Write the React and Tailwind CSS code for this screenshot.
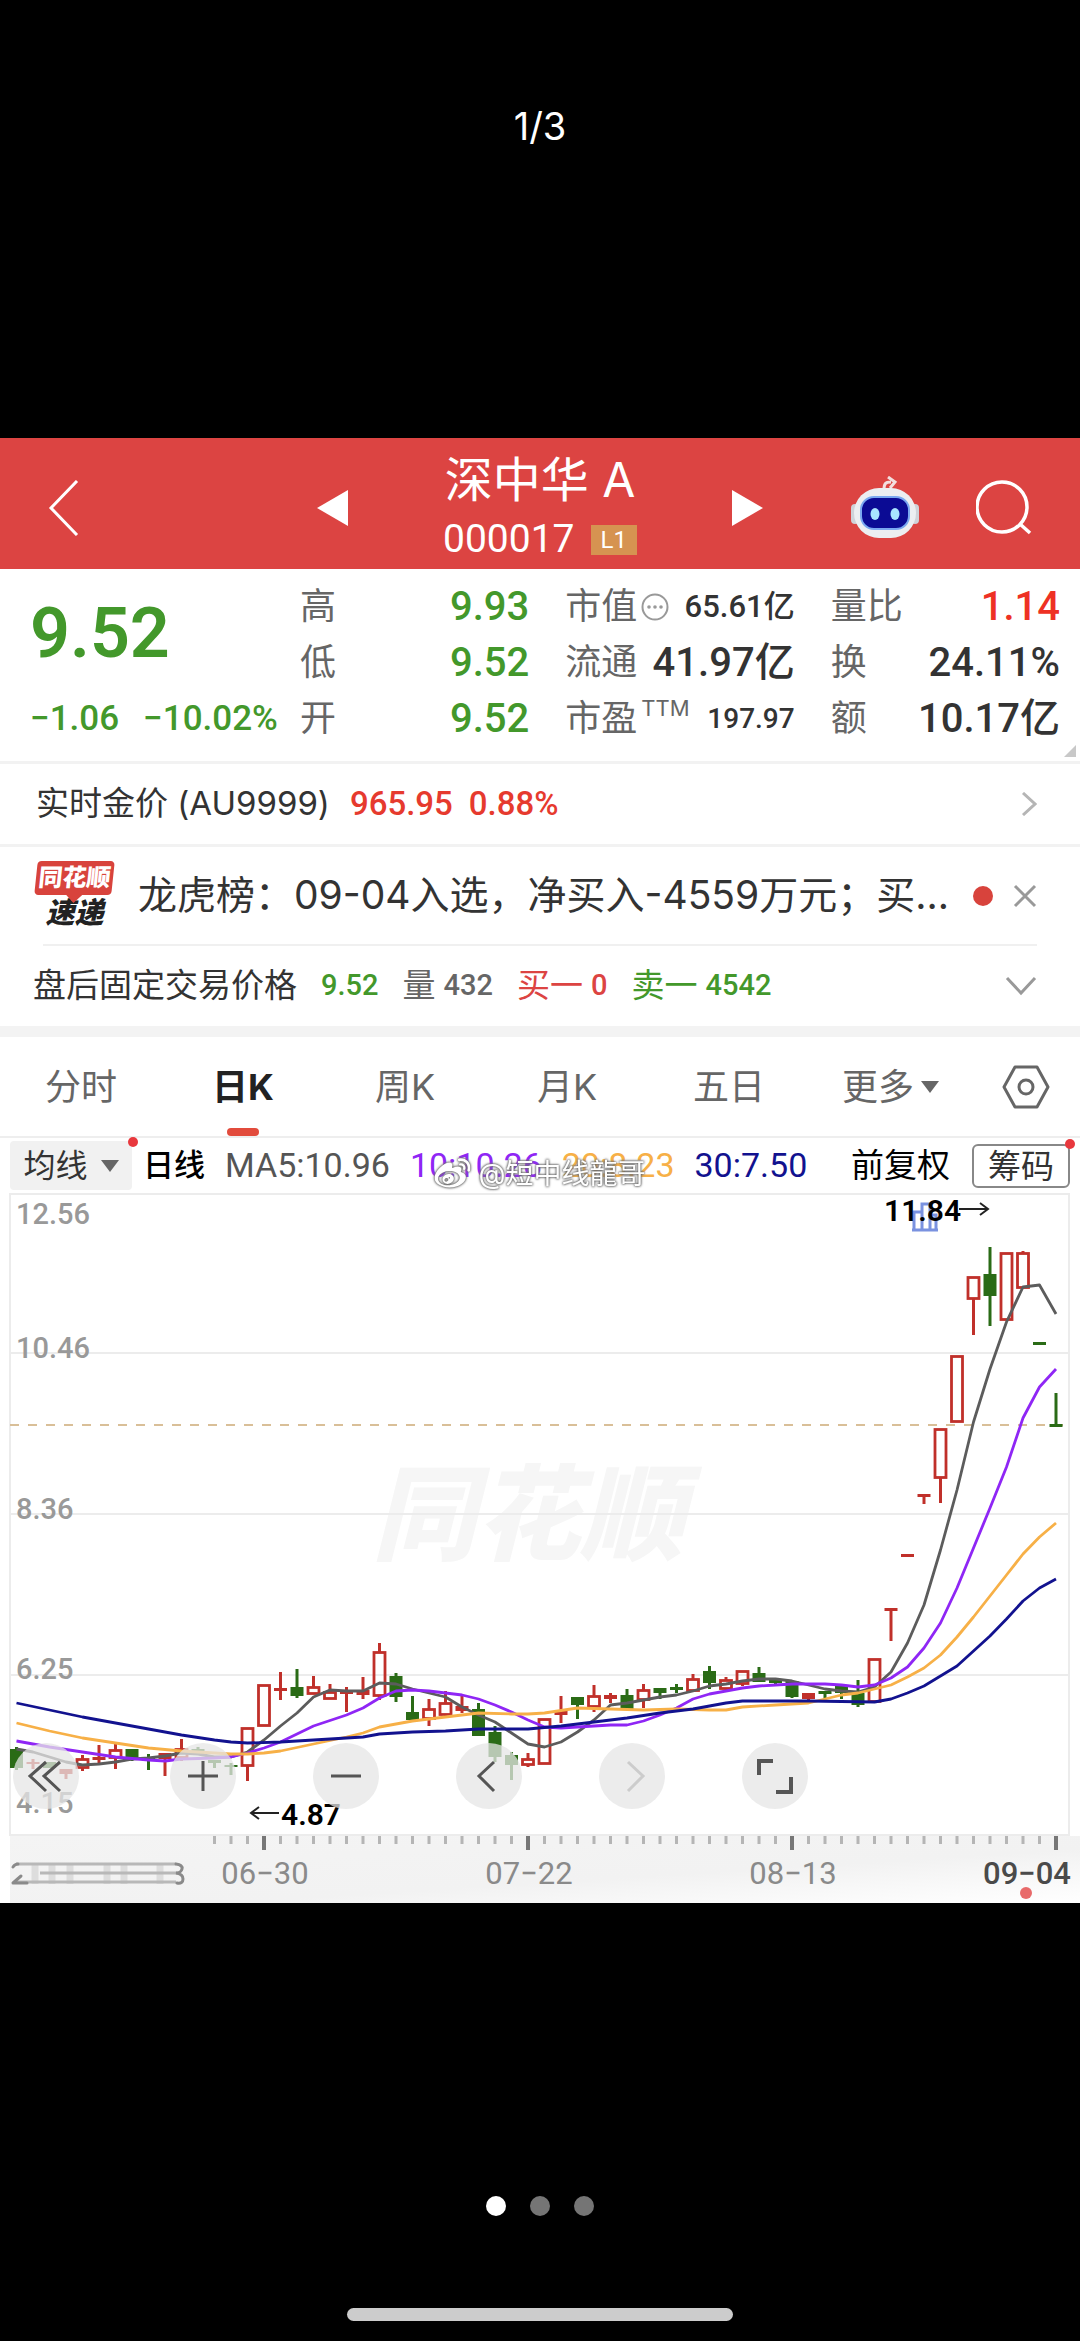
import { FaWeibo } from 'react-icons/fa';

const STEP = 16.5;
const CHART_LEFT = 10;
const CHART_RIGHT = 1069;
const CHART_BOTTOM = 642;

// [kind, body top, body bottom, high, low], kind: u = hollow up, f = thin up, d = down
const candles = [
  ['d', 556, 575, 554, 577],
  ['f', 569, 571, 566, 576],
  ['d', 569, 575, 569, 575],
  ['f', 576, 581, 576, 586],
  ['u', 566, 574, 562, 578],
  ['f', 564, 567, 552, 570],
  ['u', 557, 564, 551, 576],
  ['d', 556, 567, 556, 568],
  ['d', 564, 566, 561, 577],
  ['f', 560, 566, 560, 583],
  ['u', 556, 564, 546, 568],
  ['d', 556, 561, 554, 561],
  ['d', 567, 570, 567, 575],
  ['d', 572, 574, 570, 582],
  ['u', 535, 572, 535, 588],
  ['u', 492, 532, 492, 532],
  ['f', 495, 498, 479, 507],
  ['d', 494, 503, 476, 505],
  ['u', 494, 500, 483, 500],
  ['u', 499, 505, 491, 505],
  ['f', 498, 501, 494, 519],
  ['f', 497, 502, 484, 506],
  ['u', 459, 502, 450, 507],
  ['d', 483, 504, 480, 509],
  ['d', 519, 527, 503, 527],
  ['u', 516, 525, 506, 533],
  ['u', 510, 521, 498, 524],
  ['f', 513, 518, 503, 520],
  ['d', 516, 543, 510, 543],
  ['d', 539, 564, 533, 569],
  ['d', 562, 572, 559, 587],
  ['u', 566, 571, 560, 574],
  ['u', 526, 570, 526, 570],
  ['f', 518, 522, 503, 530],
  ['d', 504, 512, 504, 526],
  ['u', 503, 513, 492, 519],
  ['f', 502, 506, 500, 510],
  ['d', 502, 516, 496, 516],
  ['u', 497, 506, 491, 515],
  ['d', 495, 500, 495, 506],
  ['d', 494, 497, 491, 500],
  ['u', 486, 497, 481, 497],
  ['d', 478, 490, 473, 496],
  ['u', 487, 495, 484, 498],
  ['u', 478, 490, 478, 493],
  ['d', 480, 489, 474, 489],
  ['d', 486, 490, 486, 492],
  ['d', 488, 504, 488, 505],
  ['f', 500, 506, 500, 509],
  ['d', 498, 501, 498, 506],
  ['d', 493, 500, 493, 506],
  ['d', 500, 512, 487, 514],
  ['u', 466, 508, 466, 508],
  ['f', 415, 418, 415, 448],
  ['f', 361, 364, 361, 364],
  ['f', 301, 304, 301, 311],
  ['u', 236, 284, 236, 310],
  ['u', 163, 228, 163, 228],
  ['u', 84, 105, 84, 142],
  ['d', 81, 103, 54, 133],
  ['u', 60, 126, 60, 126],
  ['u', 60, 94, 58, 94],
  ['d', 149, 152, 149, 152],
  ['d', 231, 234, 200, 234],
];

// [candle index, y]
const averages = [
  {
    name: 'MA5',
    color: '#5c5c5c',
    points: [
      [0, 556], [1, 559], [2, 564], [3, 569], [4, 572], [5, 571], [6, 569], [7, 566], [8, 565], [9, 563],
      [10, 560], [11, 561], [12, 564], [13, 564], [14, 559], [15, 547], [16, 533], [17, 520], [18, 504],
      [19, 497], [20, 498], [21, 498], [22, 490], [23, 491], [24, 496], [25, 500], [26, 504], [27, 514],
      [28, 522], [29, 529], [30, 540], [31, 551], [32, 554], [33, 549], [34, 539], [35, 527], [36, 512],
      [37, 510], [38, 507], [39, 504], [40, 502], [41, 498], [42, 493], [43, 491], [44, 488], [45, 486],
      [46, 486], [47, 488], [48, 492], [49, 496], [50, 498], [51, 499], [52, 494], [53, 479], [54, 450],
      [55, 412], [56, 357], [57, 297], [58, 229], [59, 176], [60, 129], [61, 94], [62, 92], [63, 121],
    ],
  },
  {
    name: 'MA10',
    color: '#8f26f5',
    points: [
      [0, 548], [2, 554], [4, 559], [6, 564], [8, 567], [9, 568], [10, 566], [12, 565], [13, 564], [14, 560],
      [15, 555], [16, 549], [17, 541], [18, 533], [20, 522], [21, 515], [22, 505], [23, 498], [24, 497],
      [25, 498], [26, 500], [27, 502], [28, 506], [29, 512], [30, 519], [31, 527], [32, 534], [33, 535],
      [34, 534], [35, 533], [36, 532], [37, 532], [38, 528], [39, 522], [40, 515], [41, 506], [42, 501],
      [43, 498], [44, 495], [45, 493], [46, 492], [47, 491], [49, 491], [50, 492], [51, 494], [52, 492],
      [53, 485], [54, 474], [55, 455], [56, 430], [57, 395], [58, 355], [59, 315], [60, 274], [61, 225],
      [62, 194], [63, 176],
    ],
  },
  {
    name: 'MA20',
    color: '#f7b047',
    points: [
      [0, 530], [2, 538], [4, 545], [6, 550], [8, 555], [10, 558], [12, 560], [13, 561], [14, 561], [15, 560],
      [16, 558], [18, 551], [20, 544], [21, 540], [22, 534], [23, 531], [24, 528], [26, 524], [28, 520],
      [30, 521], [31, 521], [32, 520], [34, 515], [36, 516], [38, 517], [40, 516], [42, 517], [43, 517],
      [44, 514], [46, 512], [48, 510], [49, 506], [50, 502], [51, 500], [52, 496], [53, 492], [54, 484],
      [55, 475], [56, 462], [57, 444], [58, 424], [59, 403], [60, 382], [61, 361], [62, 344], [63, 330],
    ],
  },
  {
    name: 'MA30',
    color: '#12128f',
    points: [
      [0, 510], [4, 524], [8, 536], [10, 542], [12, 547], [13, 549], [14, 550], [16, 549], [18, 547],
      [20, 545], [21, 544], [22, 541], [24, 539], [26, 538], [28, 536], [31, 536], [33, 533], [35, 529],
      [37, 525], [39, 520], [41, 516], [42, 513], [43, 510], [44, 508], [48, 508], [52, 509], [53, 506],
      [54, 500], [55, 493], [56, 483], [57, 473], [58, 458], [59, 443], [60, 426], [61, 408], [62, 395],
      [63, 386],
    ],
  },
];

const priceLabels = [
  { text: '12.56', y: 31 },
  { text: '10.46', y: 165 },
  { text: '8.36', y: 326 },
  { text: '6.25', y: 486 },
  { text: '4.15', y: 620 },
];

const tabs = ['分时', '日K', '周K', '月K', '五日'];

const candleX = (index) => 16.5 + index * STEP;

const Candle = ({ index, data }) => {
  const [kind, top, bottom, high, low] = data;
  const x = candleX(index);
  const color = kind === 'd' ? '#2a6b16' : '#c0302a';

  return (
    <g stroke={color} strokeWidth="3">
      {high < top && <line x1={x} x2={x} y1={high} y2={top} />}
      {low > bottom && <line x1={x} x2={x} y1={bottom} y2={low} />}
      {kind === 'u' ? (
        <rect x={x - 5.5} y={top + 0.5} width="11" height={bottom - top} fill="none" strokeWidth="2.8" />
      ) : (
        <rect x={x - 6.5} y={top} width="13" height={bottom - top} fill={color} stroke="none" />
      )}
    </g>
  );
};

const KLineChart = () => (
  <svg viewBox="0 0 1080 710" className="block w-full h-auto font-['Roboto',sans-serif]">
    <defs>
      <linearGradient id="axis" x1="0" x2="1" y1="0" y2="1">
        <stop offset="0" stopColor="#f4f4f4" />
        <stop offset="0.6" stopColor="#f2f2f2" />
        <stop offset="1" stopColor="#ffffff" />
      </linearGradient>
    </defs>

    {/* Brand watermark */}
    <text
      x="372"
      y="359"
      fontSize="104"
      fontWeight="900"
      fontStyle="italic"
      fill="#f6f6f6"
      className="font-['Noto_Sans_CJK_SC',sans-serif]"
    >
      同花顺
    </text>

    {/* Grid */}
    <g stroke="#ececec" strokeWidth="2">
      <rect x={CHART_LEFT} y="1" width={CHART_RIGHT - CHART_LEFT} height={CHART_BOTTOM - 1} fill="none" />
      <line x1={CHART_LEFT} x2={CHART_RIGHT} y1="160" y2="160" />
      <line x1={CHART_LEFT} x2={CHART_RIGHT} y1="321" y2="321" />
      <line x1={CHART_LEFT} x2={CHART_RIGHT} y1="482" y2="482" />
    </g>
    <line x1={CHART_LEFT} x2={CHART_RIGHT} y1="232" y2="232" stroke="#d9bf98" strokeWidth="2" strokeDasharray="9 9" />

    <g fontSize="29" fontWeight="500" fill="#999999">
      {priceLabels.map((label) => (
        <text key={label.text} x="16" y={label.y}>{label.text}</text>
      ))}
    </g>

    {candles.map((data, index) => (
      <Candle key={index} index={index} data={data} />
    ))}

    {averages.map((line) => (
      <polyline
        key={line.name}
        points={line.points.map(([index, y]) => `${candleX(index)},${y}`).join(' ')}
        fill="none"
        stroke={line.color}
        strokeWidth="2.8"
        strokeLinejoin="round"
      />
    ))}

    {/* High and low marks */}
    <g stroke="#7a92e0" strokeWidth="3" fill="none">
      <path d="M914 38V19h8v19M922 38V11h8v27M930 38V22h6v16M912 37h26" />
    </g>
    <g fontSize="30" fontWeight="600" fill="#000000">
      <text x="884" y="28">11.84</text>
      <text x="281" y="632">4.87</text>
    </g>
    <g stroke="#222222" strokeWidth="2" fill="none">
      <path d="M959 16h29M980 10l8 6-8 6" />
      <path d="M279 620h-28M259 614l-8 6 8 6" />
    </g>

    {/* Date axis */}
    <rect x={CHART_LEFT} y="643" width="1070" height="67" fill="url(#axis)" />
    {candles.map((_, index) => {
      if (index < 12) return null;
      const major = index % 16 === 15;
      return (
        <line
          key={index}
          x1={candleX(index)}
          x2={candleX(index)}
          y1="643"
          y2={major ? 657 : 651}
          stroke={major ? '#777777' : '#b5b5b5'}
          strokeWidth={major ? 4 : 3}
        />
      );
    })}
    <g stroke="#dddddd" strokeWidth="7">
      <path d="M35 672v19M52 672v19M70 672v19M107 672v19M124 672v19M160 672v19" />
    </g>
    <g stroke="#b8b8b8" strokeWidth="3">
      <path d="M16 671h160M40 680h140M16 689h160" />
    </g>
    <g stroke="#8a8a8a" strokeWidth="3" fill="none" strokeLinecap="round">
      <path d="M13 674q2-3 5-3M13 690l8-7M13 690h14" />
      <path d="M176 671q7 1 6 5t-6 4q7 1 7 6t-6 4" />
    </g>
    <g fontSize="31" fill="#8a8a8a" textAnchor="middle">
      <text x="265" y="691">06−30</text>
      <text x="529" y="691">07−22</text>
      <text x="793" y="691">08−13</text>
    </g>
    <text x="1071" y="691" fontSize="31" fontWeight="500" fill="#4a4a4a" textAnchor="end">09−04</text>
    <circle cx="1026" cy="700" r="6" fill="#e86a6a" />
  </svg>
);

const ChartButton = ({ label, muted, children }) => (
  <button
    type="button"
    aria-label={label}
    className="flex h-[66px] w-[66px] items-center justify-center rounded-full bg-[#e6e6e6]/75"
  >
    <svg
      viewBox="0 0 66 66"
      className="h-full w-full"
      fill="none"
      stroke={muted ? '#cccccc' : '#555555'}
      strokeWidth="3"
    >
      {children}
    </svg>
  </button>
);

const Quote = ({ label, extra, value, className }) => (
  <div className="flex h-14 items-center justify-between whitespace-nowrap">
    <span className="flex items-center text-4xl text-[#666]">
      {label}
      {extra}
    </span>
    <span className={className}>{value}</span>
  </div>
);

const Header = () => (
  <header className="flex h-[131px] items-center bg-[#dc4442] pt-2 pl-1 text-white">
    <div className="flex flex-1 pl-11">
      <button type="button" aria-label="返回">
        <svg className="h-14 w-8" viewBox="0 0 32 56" fill="none" stroke="currentColor" strokeWidth="3">
          <path d="M29 1L3 28l26 27" />
        </svg>
      </button>
    </div>

    <div className="flex w-[446px] items-center justify-between">
      <button type="button" aria-label="上一只">
        <svg className="h-9 w-8" viewBox="0 0 32 36" fill="currentColor">
          <path d="M31 0v36L0 18z" />
        </svg>
      </button>
      <div className="flex flex-col items-center">
        <h1 className="text-[48px] leading-[64px]">深中华 A</h1>
        <div className="flex h-14 items-center gap-4">
          <span className="font-['Roboto',sans-serif] text-[39px] leading-none">000017</span>
          <span className="bg-[#d69351] px-[10px] font-['Roboto',sans-serif] text-2xl leading-[30px]">L1</span>
        </div>
      </div>
      <button type="button" aria-label="下一只">
        <svg className="h-9 w-8" viewBox="0 0 32 36" fill="currentColor">
          <path d="M1 0v36l31-18z" />
        </svg>
      </button>
    </div>

    <div className="flex flex-1 items-center justify-end gap-[56px] pr-12">
      <button type="button" aria-label="智能助手">
        <svg className="h-16 w-[70px]" viewBox="0 0 70 64">
          <path d="M34 14c0-6 1-8 7-8M38 1l7 5-5 6" fill="none" stroke="#f3dede" strokeWidth="3" />
          <rect x="1" y="28" width="8" height="20" rx="4" fill="#cfd2d8" />
          <rect x="61" y="28" width="8" height="20" rx="4" fill="#cfd2d8" />
          <rect x="4" y="12" width="62" height="50" rx="25" fill="#eceef1" />
          <rect x="11" y="21" width="48" height="32" rx="13" fill="#0b0b94" stroke="#7aa8f0" strokeWidth="2" />
          <ellipse cx="25" cy="38" rx="4.500" ry="6" fill="#a9e4ff" />
          <ellipse cx="45" cy="38" rx="4.500" ry="6" fill="#a9e4ff" />
        </svg>
      </button>
      <button type="button" aria-label="搜索">
        <svg className="h-14 w-14" viewBox="0 0 56 56" fill="none" stroke="currentColor" strokeWidth="3.5">
          <circle cx="26" cy="27" r="25" />
          <path d="M44 44l10 9" />
        </svg>
      </button>
    </div>
  </header>
);

const QuotePanel = () => (
  <section className="relative grid h-[195px] grid-cols-[234px_1fr_1fr_1fr] gap-x-9 border-b-3 border-[#f2f2f2] pt-[10px] pr-5 pl-[30px] font-['Roboto','Noto_Sans_CJK_SC',sans-serif]">
    <div className="whitespace-nowrap text-[#43982b]">
      <p className="h-28 text-[70px] leading-[108px] font-semibold">9.52</p>
      <p className="flex h-14 items-center gap-6 text-[35px] font-medium">
        <span>−1.06</span>
        <span>−10.02%</span>
      </p>
    </div>
    <div>
      <Quote label="高" value="9.93" className="text-[40px] font-medium text-[#43982b]" />
      <Quote label="低" value="9.52" className="text-[40px] font-medium text-[#43982b]" />
      <Quote label="开" value="9.52" className="text-[40px] font-medium text-[#43982b]" />
    </div>
    <div>
      <Quote
        label="市值"
        extra={
          <svg className="ml-1 h-7 w-7" viewBox="0 0 28 28" fill="#999">
            <circle cx="14" cy="14" r="12.5" fill="none" stroke="#999" strokeWidth="2" />
            <circle cx="8" cy="14" r="1.8" />
            <circle cx="14" cy="14" r="1.8" />
            <circle cx="20" cy="14" r="1.8" />
          </svg>
        }
        value="65.61亿"
        className="text-[31px] font-medium text-[#333]"
      />
      <Quote label="流通" value="41.97亿" className="text-[40px] font-medium text-[#333]" />
      <Quote
        label="市盈"
        extra={<sup className="ml-1 font-['Inter',sans-serif] text-[22px] leading-none">TTM</sup>}
        value="197.97"
        className="text-[28px] font-medium text-[#333]"
      />
    </div>
    <div>
      <Quote label="量比" value="1.14" className="text-[40px] font-medium text-[#ee3124]" />
      <Quote label="换" value="24.11%" className="text-[40px] font-medium text-[#333]" />
      <Quote label="额" value="10.17亿" className="text-[40px] font-medium text-[#333]" />
    </div>
    <svg className="absolute right-1 bottom-1 h-3 w-3" viewBox="0 0 12 12" fill="#c8c8c8">
      <path d="M12 0v12H0z" />
    </svg>
  </section>
);

const App = () => {
  return (
    <div className="flex min-h-screen flex-col bg-black font-['Inter','Noto_Sans_CJK_SC',sans-serif]">
      <div className="h-[438px] pt-[98px] text-center text-[38px] leading-14 text-white">1/3</div>

      <main className="bg-white text-[#333]">
        <Header />
        <QuotePanel />

        {/* Gold price */}
        <a href="#gold" className="flex h-[83px] items-center border-b-3 border-[#f2f2f2] pr-[43px] pl-9 text-[33px]">
          <span>实时金价 (AU9999)</span>
          <span className="ml-5 font-['Roboto',sans-serif] font-medium text-[#e63a2e]">965.95</span>
          <span className="ml-4 font-['Roboto',sans-serif] font-medium text-[#e63a2e]">0.88%</span>
          <svg className="ml-auto h-6 w-4" viewBox="0 0 16 24" fill="none" stroke="#b5b5b5" strokeWidth="3">
            <path d="M2 1l12 11L2 23" />
          </svg>
        </a>

        {/* News */}
        <div className="flex h-[97px] items-center pr-[43px] pl-[34px]">
          <div className="flex w-[81px] flex-col items-center">
            <span className="relative h-[34px] w-[77px] -skew-x-6 rounded-sm bg-[#d8433c] text-center text-[24px] leading-[34px] font-black text-white">
              同花顺
              <svg className="absolute top-full left-8 h-2 w-4" viewBox="0 0 16 8" fill="#d8433c">
                <path d="M0 0h16L8 8z" />
              </svg>
            </span>
            <span className="text-[29px] leading-9 font-black text-[#222] italic">速递</span>
          </div>
          <p className="ml-[23px] flex-1 text-[39px] whitespace-nowrap">
            龙虎榜：09-04入选，净买入-4559万元；买...
          </p>
          <span className="h-5 w-5 rounded-full bg-[#d8433c]" />
          <button type="button" aria-label="关闭" className="ml-5">
            <svg className="h-6 w-6" viewBox="0 0 24 24" fill="none" stroke="#999" strokeWidth="3">
              <path d="M2 2l20 20M22 2L2 22" />
            </svg>
          </button>
        </div>
        <hr className="mr-[43px] ml-[43px] border-t-2 border-[#f0f0f0]" />

        {/* After-hours fixed price */}
        <div className="flex h-20 items-center gap-6 pr-[43px] pl-[33px] text-[33px]">
          <span>盘后固定交易价格</span>
          <span className="font-['Roboto',sans-serif] text-[29px] font-medium text-[#43982b]">9.52</span>
          <span className="flex items-center gap-2 text-[#666]">
            量<span className="font-['Roboto',sans-serif] text-[29px] font-medium">432</span>
          </span>
          <span className="flex items-center gap-2 text-[#dc4442]">
            买一<span className="font-['Roboto',sans-serif] text-[29px] font-medium">0</span>
          </span>
          <span className="flex items-center gap-2 text-[#43982b]">
            卖一<span className="font-['Roboto',sans-serif] text-[29px] font-medium">4542</span>
          </span>
          <button type="button" aria-label="展开" className="ml-auto">
            <svg className="h-5 w-8" viewBox="0 0 32 20" fill="none" stroke="#999" strokeWidth="3">
              <path d="M2 2l14 15L30 2" />
            </svg>
          </button>
        </div>

        {/* Period tabs */}
        <nav className="grid h-[112px] grid-cols-[repeat(6,3fr)_2fr] border-t-11 border-b-2 border-t-[#f3f3f3] border-b-[#eee] text-4xl text-[#666]">
          {tabs.map((tab) => (
            <button key={tab} type="button" className={tab === '日K' ? 'relative font-bold text-[#222]' : ''}>
              {tab}
              {tab === '日K' && (
                <span className="absolute bottom-0 left-1/2 h-2 w-8 -translate-x-1/2 rounded-full bg-[#e24b3c]" />
              )}
            </button>
          ))}
          <button type="button" className="flex items-center justify-center gap-[6px]">
            更多
            <svg className="h-3 w-5" viewBox="0 0 20 12" fill="#666">
              <path d="M1 0h18l-9 12z" />
            </svg>
          </button>
          <button type="button" aria-label="设置" className="flex items-center justify-center">
            <svg className="h-11 w-12" viewBox="0 0 48 44" fill="none" stroke="#666" strokeWidth="3">
              <path d="M13 2h22l11 20-11 20H13L2 22z" strokeLinejoin="round" />
              <circle cx="24" cy="22" r="7" />
            </svg>
          </button>
        </nav>

        {/* Moving averages */}
        <div className="relative flex h-[55px] items-center pr-[10px] pl-[10px] whitespace-nowrap">
          <button type="button" className="relative flex h-[49px] w-[122px] items-center justify-center gap-[13px] rounded bg-[#f1f1f1] text-[32px]">
            均线
            <svg className="h-3 w-[18px]" viewBox="0 0 18 12" fill="#666">
              <path d="M0 0h18l-9 12z" />
            </svg>
            <span className="absolute -top-1 -right-[6px] h-[10px] w-[10px] rounded-full bg-[#e8383d]" />
          </button>
          <span className="ml-[11px] text-[31px] font-medium text-black">日线</span>
          <div className="ml-5 flex flex-1 gap-5 font-['Roboto',sans-serif] text-[34px]">
            <span className="text-[#555]">MA5:10.96</span>
            <span className="text-[#8f26f5]">10:10.26</span>
            <span className="text-[#f7b047]">20:8.23</span>
            <span className="text-[#12128f]">30:7.50</span>
          </div>
          <button type="button" className="text-[33px] text-black">前复权</button>
          <button type="button" className="relative ml-[22px] h-11 w-[98px] rounded-md border-2 border-[#888] text-[33px] leading-10 text-[#333]">
            筹码
            <span className="absolute -top-[7px] -right-[7px] h-[10px] w-[10px] rounded-full bg-[#e8383d]" />
          </button>
          <div className="absolute top-[18px] left-1/2 flex -translate-x-1/2 items-center gap-2 text-[28px] leading-9 text-white [filter:drop-shadow(0_0_1px_#555)_drop-shadow(0_0_1px_#888)]">
            <FaWeibo className="h-9 w-9" />
            @短中线龍哥
          </div>
        </div>

        <div className="relative">
          <KLineChart />
          <div className="absolute bottom-[94px] left-[13px] flex gap-[77px]">
            <div className="mr-[14px] flex">
              <ChartButton label="最早">
                <path d="M33 19L17 33l16 15M47 19L31 33l16 15" />
              </ChartButton>
            </div>
            <ChartButton label="放大">
              <path d="M18 33h30M33 18v30" />
            </ChartButton>
            <ChartButton label="缩小">
              <path d="M18 33h30" />
            </ChartButton>
            <ChartButton label="向左">
              <path d="M38 19L23 33l15 15" />
            </ChartButton>
            <ChartButton label="向右" muted>
              <path d="M29 19l15 14-15 15" />
            </ChartButton>
            <ChartButton label="全屏">
              <path d="M17 32V18h14M49 34v15H34" strokeWidth="4" />
            </ChartButton>
          </div>
        </div>
      </main>

      <footer className="flex flex-1 flex-col items-center justify-between pt-[293px] pb-5">
        <div className="flex gap-6">
          <span className="h-5 w-5 rounded-full bg-white" />
          <span className="h-5 w-5 rounded-full bg-[#757575]" />
          <span className="h-5 w-5 rounded-full bg-[#757575]" />
        </div>
        <div className="h-[13px] w-[386px] rounded-full bg-[#ccc]" />
      </footer>
    </div>
  );
};

export default App;
